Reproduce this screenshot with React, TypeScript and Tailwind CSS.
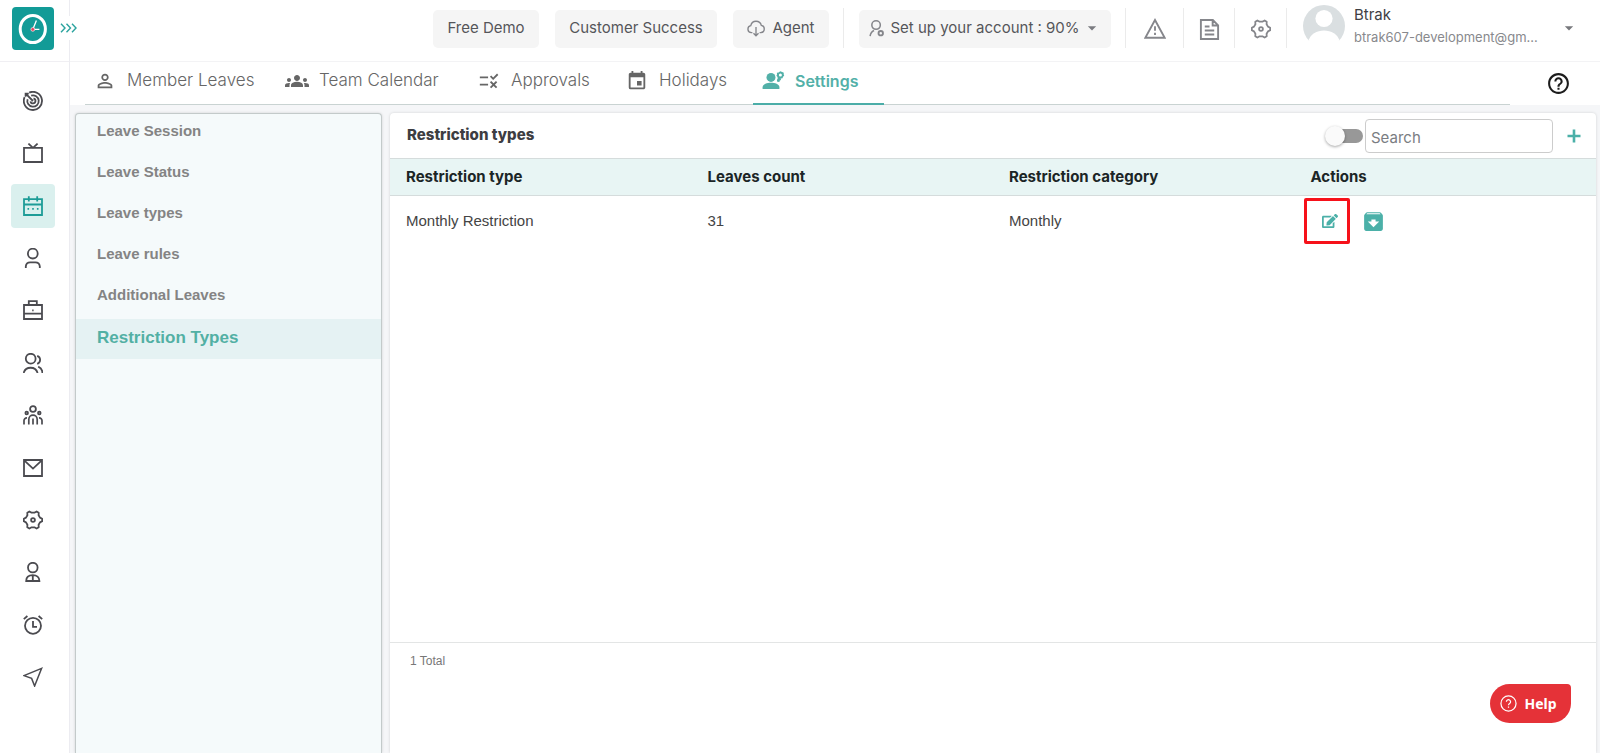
import React from "react";
import { FaEdit } from "react-icons/fa";
import {
  MdArchive,
  MdArrowDropDown,
  MdEvent,
  MdGroups,
  MdHelpOutline,
  MdPersonOutline,
  MdRule,
} from "react-icons/md";

type IconProps = { className?: string; children?: React.ReactNode };

function Line({ className = "size-5", children }: IconProps) {
  return (
    <svg
      viewBox="0 0 20 20"
      className={className}
      fill="none"
      stroke="currentColor"
      strokeWidth="1.8"
      aria-hidden="true"
    >
      {children}
    </svg>
  );
}

const gearShape = (
  <>
    <path
      d="M19.2 8.8V11.200L17 12.400L15.600 14.800L15.700 17.200L13.600 18.500L11.400 17.300H8.600L6.400 18.500L4.300 17.200L4.400 14.800L3 12.400L.8 11.200V8.800L3 7.600L4.400 5.200L4.300 2.800L6.400 1.500L8.600 2.700H11.400L13.600 1.500L15.700 2.800L15.600 5.200L17 7.600Z"
      strokeLinejoin="round"
    />
    <circle cx="10" cy="10" r="1.900" />
  </>
);

const railItems = [
  {
    label: "Goals",
    icon: (
      <>
        <path d="M6.2 1.600A9.100 9.100 0 1 1 1.600 6.200" />
        <path d="M8.200 4.600A5.700 5.700 0 1 1 4.600 8.200" />
        <path d="M10.500 7.500A2.500 2.500 0 1 1 7.500 10.300" />
        <path d="M10 10L2.400 2.400M2.600 5.800V2.600H5.800" />
      </>
    ),
  },
  {
    label: "Live",
    icon: <path d="M1 4.800h18v14.200H1zM5.400.6l4.600 4.200L14.600.6" />,
  },
  {
    label: "Leave",
    active: true,
    icon: (
      <>
        <path d="M1 3.200h18v15.800H1zM1 8.500h18M5.800.2v5.400M14.200.2v5.400" />
        <path d="M4.500 12.800h1.600M9.200 12.800h1.600M13.900 12.800h1.600" />
      </>
    ),
  },
  {
    label: "Profile",
    icon: (
      <>
        <circle cx="9.800" cy="5.600" r="4.900" />
        <path d="M2.800 20v-1.600a4.400 4.400 0 0 1 4.400-4h5.200a4.400 4.400 0 0 1 4.400 4V20" />
      </>
    ),
  },
  {
    label: "Projects",
    icon: (
      <>
        <path d="M1 5h18v14H1zM1 13.600h18M5.800 5V1.200h8V5" />
        <path d="M9.200 10.400h1.400" />
      </>
    ),
  },
  {
    label: "Clients",
    icon: (
      <>
        <circle cx="7.700" cy="5.700" r="4.900" />
        <path d="M.6 20a7.300 7.300 0 0 1 14 0M14.200 2.800a4.200 4.200 0 0 1 0 8M15.200 13.600a7 7 0 0 1 4.200 6.400" />
      </>
    ),
  },
  {
    label: "Teams",
    icon: (
      <>
        <circle cx="10" cy="4" r="2.900" />
        <circle cx="3.700" cy="8" r="1.300" />
        <circle cx="16.300" cy="8" r="1.300" />
        <path
          d="M5.800 19.600v-5.200a4.200 4.200 0 0 1 8.400 0v5.200M10 19.600v-6M1 19.600v-4a2.800 2.800 0 0 1 3-2.800M19 19.600v-4a2.800 2.800 0 0 0-3-2.800"
          strokeWidth="1.700"
        />
      </>
    ),
  },
  {
    label: "Messages",
    icon: <path d="M1 2h18v16H1zM1.200 2.400L10 10.600l8.800-8.200" />,
  },
  { label: "Administration", icon: gearShape },
  {
    label: "Staff",
    icon: (
      <>
        <circle cx="9.800" cy="5.600" r="4.800" />
        <path d="M3.200 19h13.200c0-4-2.600-5.800-6.600-5.800S3.200 15 3.200 19zM9.800 13.200v6" />
      </>
    ),
  },
  {
    label: "Time",
    icon: (
      <>
        <circle cx="10" cy="10.800" r="8" />
        <path d="M10 6v5.800h4M.8 4.200l3.600-3.200M19.200 4.200L15.600 1" />
      </>
    ),
  },
  {
    label: "Send",
    icon: <path d="M18.600 1.400L1 8.600l7.600 2.800 3 7.600z" strokeWidth="1.500" />,
  },
];

const GearBadge = ({ className = "size-6" }: IconProps) => (
  <svg viewBox="0 0 24 24" className={className} fill="currentColor" aria-hidden="true">
    <circle cx="10" cy="8.400" r="4.500" />
    <path d="M1.600 20v-1.800c0-3 4.600-4.400 8.400-4.400s8.400 1.400 8.400 4.400V20z" />
    <path
      fillRule="evenodd"
      d="M19.200 2.200l2 .9 1.600.6-.1 1.600.5 1.400-1.200 1.100-.5 1.500-1.800.1.300 1.600-1.200.4-.4 1.600-2.200-.2-.3-1.800.8-1.400-.2-1.500-1.100-1.300.6-1.300-.1-1.700 1.700-.4zM19.400 4.600a1.500 1.500 0 1 0 0 3 1.500 1.500 0 0 0 0-3z"
    />
  </svg>
);

const tabs = [
  { label: "Member Leaves", width: "w-[189px]", icon: <MdPersonOutline className="size-[22px]" /> },
  { label: "Team Calendar", width: "w-[189px]", icon: <MdGroups className="size-6" /> },
  { label: "Approvals", width: "w-[145px]", icon: <MdRule className="size-[22px]" /> },
  { label: "Holidays", width: "w-[133px]", icon: <MdEvent className="size-[22px]" /> },
  { label: "Settings", width: "w-[131px]", icon: <GearBadge />, active: true },
];

const menu = ["Leave Session", "Leave Status", "Leave types", "Leave rules", "Additional Leaves"];

function Rail() {
  return (
    <aside className="flex w-[70px] shrink-0 flex-col border-r border-[#ececf1] bg-white">
      <div className="flex h-[62px] shrink-0 items-start border-b border-[#f0eff3] pt-[7px] pl-3">
        <a href="#home" aria-label="Home" className="block rounded bg-[#129b97]">
          <svg viewBox="0 0 42 43" className="h-[43px] w-[42px]" fill="none" aria-hidden="true">
            <ellipse cx="20.800" cy="22" rx="12.600" ry="13.600" stroke="#fff" strokeWidth="3" />
            <path d="M21 22l3.400-8.600M21 22.400h6.400" stroke="#fff" strokeWidth="1.300" />
            <circle cx="20.800" cy="22.400" r="1.900" fill="#e0455e" stroke="#fff" strokeWidth=".6" />
          </svg>
        </a>
      </div>
      <nav
        aria-label="Main"
        className="mt-[17px] mr-1 flex min-h-[620px] flex-col items-center justify-between"
      >
        {railItems.map((item) => (
          <a
            key={item.label}
            href={"#" + item.label.toLowerCase()}
            aria-label={item.label}
            className={
              item.active
                ? "flex size-11 items-center justify-center rounded bg-[#daf0ee] text-[#1d9c97]"
                : "flex size-11 items-center justify-center rounded text-[#4b4b50]"
            }
          >
            <Line>{item.icon}</Line>
          </a>
        ))}
      </nav>
    </aside>
  );
}

function TopBar() {
  const pill =
    "flex h-[38px] shrink-0 items-center justify-center rounded-[5px] bg-[#f5f5f5] pb-[2px] text-[15px] text-[#55565a]";
  const cell =
    "flex h-10 shrink-0 items-center justify-center border-l border-[#ebebeb] pt-[2px] text-[#85868b]";
  return (
    <header className="relative flex h-[62px] shrink-0 items-start justify-end border-b border-[#f3f3f5] bg-white pt-2">
      <button
        type="button"
        aria-label="Expand menu"
        className="absolute top-4 -left-[14px] flex size-6 items-center justify-center bg-white text-[#2aa39e]"
      >
        <svg
          viewBox="0 0 17 10"
          className="h-[10px] w-[17px] shrink-0"
          fill="none"
          stroke="currentColor"
          strokeWidth="1.400"
          aria-hidden="true"
        >
          <path d="M1 .8L5 5 1 9.200M6.500.8L10.500 5 6.500 9.200M12 .8L16 5l-4 4.200" />
        </svg>
      </button>
      <div className="flex h-10 items-end gap-4 pr-[14px]">
        <button type="button" className={pill + " w-[106px]"}>Free Demo</button>
        <button type="button" className={pill + " w-[162px]"}>Customer Success</button>
        <button type="button" className={pill + " w-24 gap-[7px]"}>
          <Line className="size-[18px] shrink-0 text-[#85868b]">
            <path
              d="M6 15.200H4.800a4 4 0 0 1-.6-7.900 6 6 0 0 1 11.700-.2 4.100 4.100 0 0 1-.5 8.100H14M10 9v9.500M7.200 15.800L10 18.600l2.800-2.800"
              strokeWidth="1.500"
            />
          </Line>
          Agent
        </button>
      </div>
      <div className="flex h-10 items-end border-l border-[#ebebeb] pr-[14px] pl-[15px]">
        <button type="button" className={pill + " w-[252px] gap-[5px]"}>
          <Line className="size-[17px] shrink-0 text-[#85868b]">
            <circle cx="9.500" cy="6" r="5" />
            <path d="M2.500 19c.4-3.500 2-5.400 4.600-6.600" />
            <circle cx="15" cy="15.500" r="2.600" strokeWidth="2.200" />
          </Line>
          Set up your account : 90%
          <MdArrowDropDown className="-ml-[3px] size-5 shrink-0 text-[#7a7b80]" />
        </button>
      </div>
      <button type="button" aria-label="Alerts" className={cell + " w-[58px]"}>
        <Line className="size-[22px]">
          <path d="M10 1.800L18.800 18H1.200zM10 7.400v4.200M10 13.400v2" strokeWidth="1.700" />
        </Line>
      </button>
      <button type="button" aria-label="Documents" className={cell + " w-[51px]"}>
        <Line className="size-[21px]">
          <path d="M1.800 1h11.400l5 5v13H1.800zM13 1v5.200h5M5.500 7.200h4.500M5.500 11h9M5.500 14.800h9" />
        </Line>
      </button>
      <button type="button" aria-label="Preferences" className={cell + " w-[52px]"}>
        <Line className="size-5">{gearShape}</Line>
      </button>
      <button
        type="button"
        className="flex h-10 w-[314px] shrink-0 items-center border-l border-[#ebebeb] pl-4 text-left"
      >
        <svg viewBox="0 0 42 42" className="-mt-1 size-[42px] shrink-0" aria-hidden="true">
          <defs>
            <clipPath id="avatar">
              <circle cx="21" cy="21" r="21" />
            </clipPath>
          </defs>
          <g clipPath="url(#avatar)">
            <path d="M0 0h42v36H0z" fill="#dadfe1" />
            <circle cx="21" cy="13.500" r="8.600" fill="#fff" />
            <path d="M5 42V37c2-8 9-11.500 16-11.500S35 29 37 37v5z" fill="#fff" />
          </g>
        </svg>
        <span className="flex w-[190px] flex-col pb-1 pl-[9px]">
          <span className="text-[15px] leading-[22px] text-[#3f4044]">Btrak</span>
          <span className="text-[13px] leading-[22px] whitespace-nowrap text-[#88898d]">
            btrak607-development@gm...
          </span>
        </span>
        <MdArrowDropDown className="mr-[21px] ml-auto size-5 text-[#77787c]" />
      </button>
    </header>
  );
}

function TabBar() {
  return (
    <div className="flex h-[43px] shrink-0 items-stretch bg-white pl-[15px]">
      <nav aria-label="Leave management" className="flex grow gap-[3px] border-b border-[#c9d3d2]">
        {tabs.map((tab) => (
          <a
            key={tab.label}
            href={"#" + tab.label.toLowerCase().replace(" ", "-")}
            className={
              tab.width +
              " -mb-px flex shrink-0 items-center gap-[10px] border-b-2 pb-1 pl-2 whitespace-nowrap " +
              (tab.active
                ? "border-[#4bada8] text-base font-semibold text-[#52b0a8]"
                : "border-transparent text-[17px] font-light text-[#666]")
            }
          >
            <span className="flex w-6 shrink-0 items-center justify-center">{tab.icon}</span>
            <span>{tab.label}</span>
          </a>
        ))}
      </nav>
      <button
        type="button"
        aria-label="Help"
        className="flex w-[90px] shrink-0 items-center pl-9 text-[#1c1c1c]"
      >
        <MdHelpOutline className="size-[25px]" />
      </button>
    </div>
  );
}

function SideMenu() {
  return (
    <nav
      aria-label="Settings"
      className="flex w-[307px] shrink-0 flex-col rounded-t border border-b-0 border-[#c3caca] bg-[#f5fafb] font-['Liberation_Sans',Arial,sans-serif] font-bold shadow-[0_0_3px_rgba(0,0,0,0.15)]"
    >
      {menu.map((label) => (
        <a
          key={label}
          href={"#" + label.toLowerCase().replace(" ", "-")}
          className="flex h-[41px] items-center pb-[6px] pl-[21px] text-[15px] text-[#848484]"
        >
          {label}
        </a>
      ))}
      <a
        href="#restriction-types"
        aria-current="page"
        className="flex h-10 items-center bg-[#e5f2f3] pb-[2px] pl-[21px] text-[17px] text-[#52b0a4]"
      >
        Restriction Types
      </a>
    </nav>
  );
}

function Panel() {
  const th = "px-4 text-left text-[15px] font-bold text-[#1b2526]";
  const td = "px-4 text-[15px] text-[#444]";
  return (
    <section className="flex min-w-0 grow flex-col rounded-t bg-white shadow-[0_0_3px_rgba(0,0,0,0.15)]">
      <div className="flex h-[46px] shrink-0 items-center border-b border-[#d5dcdc] pr-[14px] pl-[17px]">
        <h1 className="grow text-[15px] font-extrabold text-[#3d3d42]">Restriction types</h1>
        <label className="relative block h-5 w-[38px]">
          <input type="checkbox" role="switch" aria-label="Show archived" className="peer sr-only" />
          <span className="absolute top-[3px] right-0 block h-[14px] w-9 rounded-full bg-[#989898]" />
          <span className="absolute top-0 left-0 block size-5 rounded-full bg-[#fafafa] shadow-[0_1px_3px_rgba(0,0,0,0.35)] peer-checked:left-[18px]" />
        </label>
        <input
          type="text"
          aria-label="Search"
          placeholder="Search"
          className="ml-[2px] h-[34px] w-[188px] rounded border border-[#ccc] bg-white px-[5px] pt-1 text-[15px] text-[#444] placeholder:text-[#7a7d82]"
        />
        <button
          type="button"
          aria-label="Add restriction type"
          className="ml-[13px] flex w-4 items-center justify-center text-[#4bb0a8]"
        >
          <svg viewBox="0 0 14 14" className="size-[14px]" stroke="currentColor" strokeWidth="2.600" aria-hidden="true">
            <path d="M7 .5v13M.5 7h13" />
          </svg>
        </button>
      </div>
      <div className="min-h-[484px] border-b border-[#e3e5e5]">
        <table className="w-full table-fixed border-collapse font-['Liberation_Sans',Arial,sans-serif]">
          <thead className="font-[Inter,sans-serif]">
            <tr className="h-9 border-b border-[#d5dcdc] bg-[#e8f5f4]">
              <th className={th}>Restriction type</th>
              <th className={th}>Leaves count</th>
              <th className={th}>Restriction category</th>
              <th className={th}>Actions</th>
            </tr>
          </thead>
          <tbody>
            <tr className="h-[52px]">
              <td className={td}>Monthly Restriction</td>
              <td className={td}>31</td>
              <td className={td}>Monthly</td>
              <td className="pl-[9px]">
                <div className="flex items-center gap-[11px] text-[#4bb0a8]">
                  <button
                    type="button"
                    aria-label="Edit"
                    className="flex size-[46px] items-center justify-center rounded-[2px] border-3 border-[#f6111a] pl-[6px]"
                  >
                    <FaEdit className="size-4" />
                  </button>
                  <button type="button" aria-label="Archive">
                    <MdArchive className="size-[25px]" />
                  </button>
                </div>
              </td>
            </tr>
          </tbody>
        </table>
      </div>
      <p className="pt-[10px] pl-5 font-['Liberation_Sans',Arial,sans-serif] text-xs leading-4 text-[#777]">
        1 Total
      </p>
    </section>
  );
}

export default function App() {
  return (
    <div className="flex min-h-screen overflow-x-hidden bg-white font-[Inter,sans-serif]">
      <Rail />
      <div className="flex min-w-0 grow flex-col">
        <TopBar />
        <TabBar />
        <main className="flex grow gap-2 bg-[#f5f6f8] pt-2 pr-1 pl-[5px]">
          <SideMenu />
          <Panel />
        </main>
      </div>
      <button
        type="button"
        className="fixed right-[29px] bottom-[30px] flex h-[39px] w-[81px] items-center justify-center gap-[7px] rounded-[20px] rounded-tr-[4px] bg-[#e53238] pr-1 font-['Noto_Sans',sans-serif] text-sm font-bold text-white"
      >
        <svg viewBox="0 0 18 18" className="size-[17px]" fill="none" stroke="currentColor" strokeWidth="1.300" aria-hidden="true">
          <circle cx="9" cy="9" r="8" />
          <path d="M6.800 7.200a2.200 2.200 0 1 1 3.400 1.800c-.8.500-1.200.9-1.200 1.800M9 12.200v1.400" />
        </svg>
        Help
      </button>
    </div>
  );
}
